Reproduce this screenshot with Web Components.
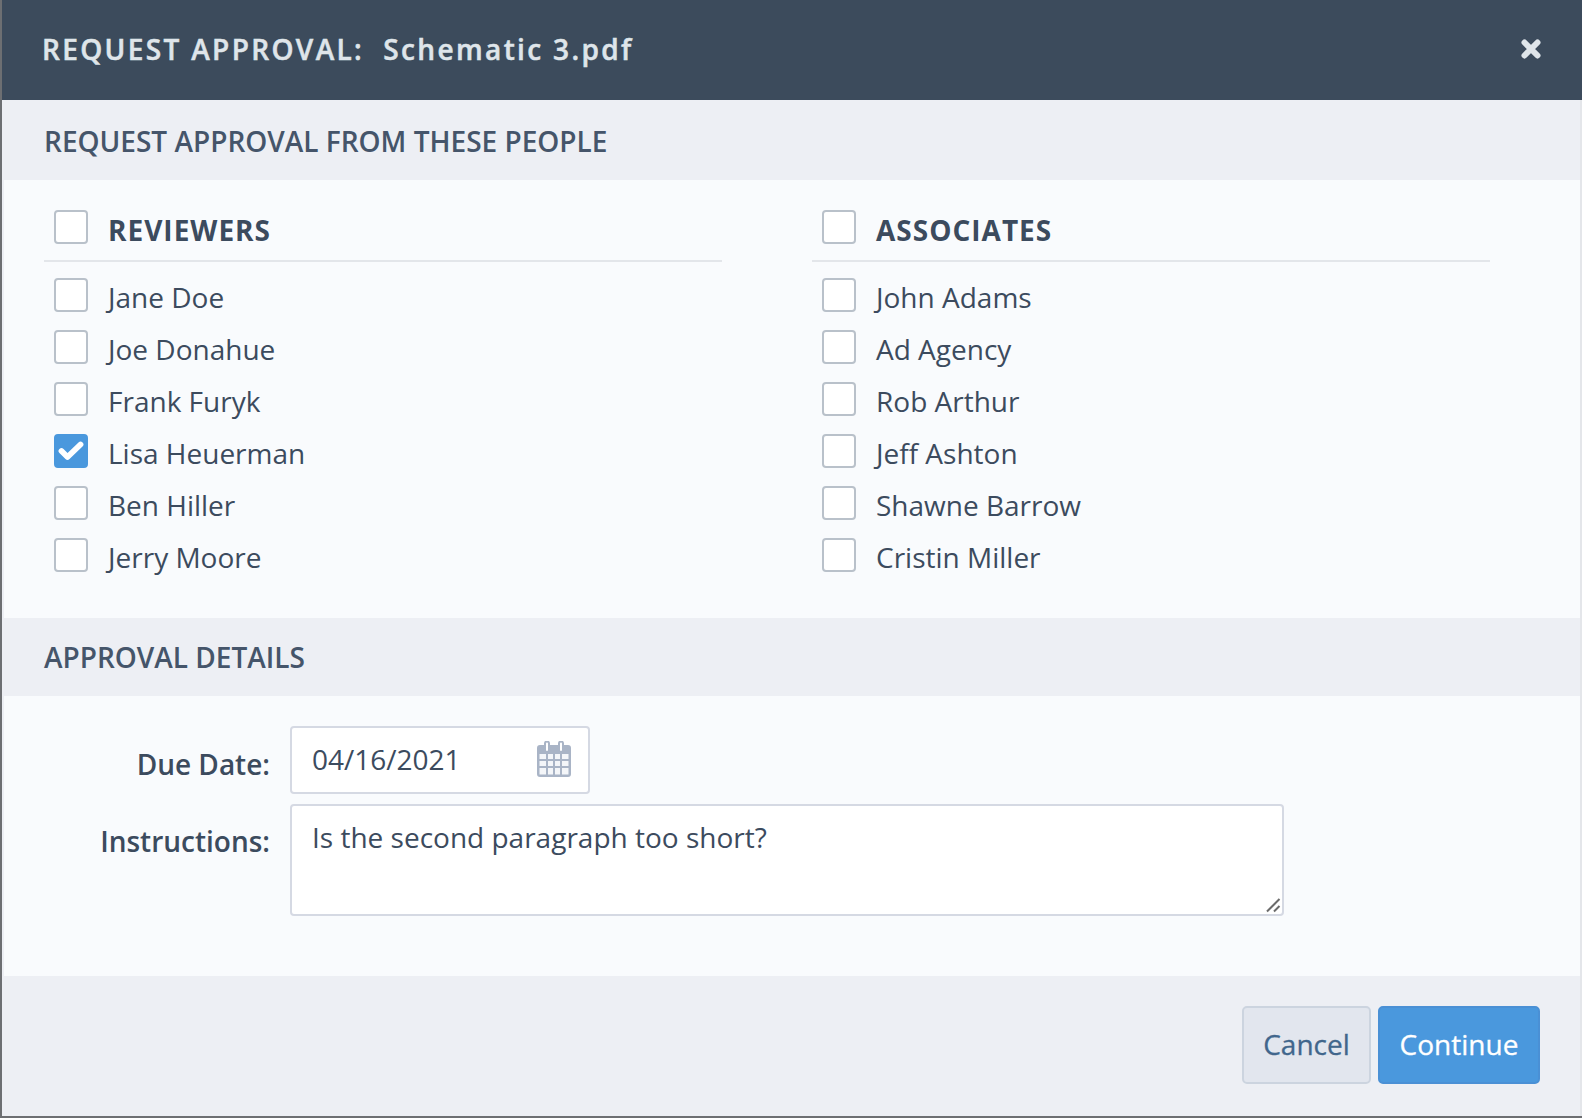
<!DOCTYPE html>
<html lang="en"><head><meta charset="utf-8"><title>Request Approval</title>
<style>
html,body{margin:0;padding:0;background:#6d6f72;height:1118px;overflow:hidden}
body{font-family:"Open Sans","Noto Sans",sans-serif;color:#3c4b5e}
</style></head><body>
<approval-dialog></approval-dialog>
<script>
function el(name, css, html){
  customElements.define(name, class extends HTMLElement{
    constructor(){super();const s=this.attachShadow({mode:'open'});s.innerHTML='<style>'+css+'</style>'+(typeof html==='function'?html(this):html);}
  });
}
el('dialog-header',`:host{display:flex;align-items:center;justify-content:space-between;box-sizing:border-box;height:100px;background:#3c4b5c;color:#dfe5ea;padding:0 43px 0 40px;margin-right:-2px;font-size:28px;font-weight:600;letter-spacing:2.35px;white-space:pre;-webkit-text-stroke:.5px #dfe5ea}
span{position:relative;top:-1px}svg{display:block;position:relative;top:-1px}`,`<span><slot></slot></span><svg width="20" height="20" viewBox="0 0 20 20"><path d="M3.500 3.500 16.500 16.500M16.500 3.500 3.500 16.500" stroke="#dfe5ea" stroke-width="6" stroke-linecap="round"/></svg>`);
el('section-title',`:host{display:flex;align-items:center;box-sizing:border-box;padding:0 42px;background:#edeff4;font-size:28px;font-weight:600;color:#45556a;white-space:pre}
span{position:relative;top:var(--nudge,0)}`,`<span><slot></slot></span>`);
el('check-box',`:host{display:block;box-sizing:border-box;width:34px;height:34px;flex:none;border:2px solid #b9c1ca;border-radius:4px;background:#fff}
:host([checked]){background:#4a98dd;border-color:#4a98dd}
svg{display:none;margin:-2px}:host([checked]) svg{display:block}`,`<svg width="34" height="34" viewBox="0 0 34 34"><path d="M7.500 17 13.500 23 26.500 10.500" fill="none" stroke="#fff" stroke-width="5.800" stroke-linecap="round" stroke-linejoin="round"/></svg>`);
el('person-row',`:host{display:flex;align-items:center;height:52px;padding-left:10px;gap:20px;font-size:28px;color:#3c4b5e;line-height:38px}
span{position:relative;top:2px}`,h=>`<check-box ${h.hasAttribute('checked')?'checked':''}></check-box><span><slot></slot></span>`);
el('people-column',`:host{display:block;width:678px}
.head{display:flex;align-items:center;height:62px;padding:0 0 6px 10px;gap:20px;border-bottom:2px solid #e3e6ea;box-sizing:border-box;font-size:28px;font-weight:700;letter-spacing:1px;margin-top:-4px}
.head span{position:relative;top:3px}
.rows{display:flex;flex-direction:column;padding-top:7px}`,h=>`<div class="head"><check-box></check-box><span>${h.getAttribute('title')}</span></div><div class="rows"><slot></slot></div>`);
el('form-row',`:host{display:flex;align-items:flex-start;gap:20px}
label{width:266px;text-align:right;font-size:28px;font-weight:600;color:#3c4b5e;line-height:38px;flex:none;padding-top:var(--label-top,19px);box-sizing:border-box}`,h=>`<label>${h.getAttribute('label')}</label><slot></slot>`);
el('date-field',`:host{display:flex;align-items:center;justify-content:space-between;box-sizing:border-box;width:300px;height:68px;border:2px solid #d5d9e3;border-radius:4px;background:#fff;padding:0 17px 0 20px;font-size:28px;color:#3c4b5e}
span{position:relative;top:-1px}svg{display:block;position:relative;top:-1px}`,`<span><slot></slot></span><svg width="34" height="36" viewBox="0 0 34 36"><path fill="#a9b4c6" d="M3 4h4v-1.500a3 3 0 0 1 6 0V4h8v-1.500a3 3 0 0 1 6 0V4h4a3 3 0 0 1 3 3v26a3 3 0 0 1-3 3H3a3 3 0 0 1-3-3V7a3 3 0 0 1 3-3z"/><path fill="#fff" d="M9 2.500a1 1 0 0 1 2 0V9a1 1 0 0 1-2 0zM23 2.500a1 1 0 0 1 2 0V9a1 1 0 0 1-2 0z"/><path fill="#f4f6f9" d="M2.500 13h6.500v5H2.500zM11 13h5v5h-5zM18 13h5v5h-5zM25 13h6.500v5H25zM2.500 20h6.500v5H2.500zM11 20h5v5h-5zM18 20h5v5h-5zM25 20h6.500v5H25zM2.500 27h6.500v6.500H2.500zM11 27h5v6.500h-5zM18 27h5v6.500h-5zM25 27h6.500v6.500H25z"/></svg>`);
el('note-field',`:host{display:block;position:relative;box-sizing:border-box;width:994px;height:112px;border:2px solid #d5d9e3;border-radius:4px;background:#fff;padding:12px 20px;font-size:28px;line-height:38px;color:#3c4b5e}
svg{position:absolute;right:1px;bottom:1px}`,`<slot></slot><svg width="16" height="16" viewBox="0 0 16 16"><path d="M2 14.500 14.500 2M9 14.500 14.500 9" stroke="#6b6b6b" stroke-width="2" fill="none"/></svg>`);
el('action-button',`:host{display:flex;align-items:center;justify-content:center;box-sizing:border-box;height:78px;border-radius:5px;font-size:28px;border:2px solid #ccd4df;background:#e2e6ee;color:#41668c;-webkit-text-stroke:.3px currentColor}
span{position:relative;top:-1px}
:host([primary]){background:#4a98dd;border-color:#4a90d5;color:#fff}`,`<span><slot></slot></span>`);
el('approval-dialog',`:host{display:flex;flex-direction:column;box-sizing:border-box;width:1582px;height:1118px;padding:0 0 2px 2px}
.panel{background:#f9fbfd;margin-left:2px}
.people{display:flex;gap:90px;box-sizing:border-box;height:438px;padding:24px 0 0 40px}
.details{display:flex;flex-direction:column;gap:10px;box-sizing:border-box;height:280px;padding:30px 0 0 0}
.wrap{display:flex;flex-direction:column;flex:1;background:#edeff4;border-right:2px solid #e4e6ea}
footer{flex:1;display:flex;justify-content:flex-end;gap:7px;padding:30px 40px 0 0;background:#edeff4}
.c{width:129px}.p{width:162px}`,`<dialog-header>REQUEST APPROVAL:  Schematic 3.pdf</dialog-header>
<div class="wrap">
<section-title style="height:80px;--nudge:1px">REQUEST APPROVAL FROM THESE PEOPLE</section-title>
<div class="panel"><div class="people">
<people-column title="REVIEWERS"><person-row>Jane Doe</person-row><person-row>Joe Donahue</person-row><person-row>Frank Furyk</person-row><person-row checked>Lisa Heuerman</person-row><person-row>Ben Hiller</person-row><person-row>Jerry Moore</person-row></people-column>
<people-column title="ASSOCIATES"><person-row>John Adams</person-row><person-row>Ad Agency</person-row><person-row>Rob Arthur</person-row><person-row>Jeff Ashton</person-row><person-row>Shawne Barrow</person-row><person-row>Cristin Miller</person-row></people-column>
</div></div>
<section-title style="height:78px">APPROVAL DETAILS</section-title>
<div class="panel"><div class="details">
<form-row label="Due Date:"><date-field>04/16/2021</date-field></form-row>
<form-row label="Instructions:" style="--label-top:18px"><note-field>Is the second paragraph too short?</note-field></form-row>
</div></div>
<footer><action-button class="c">Cancel</action-button><action-button class="p" primary>Continue</action-button></footer>
</div>`);
</script></body></html>
